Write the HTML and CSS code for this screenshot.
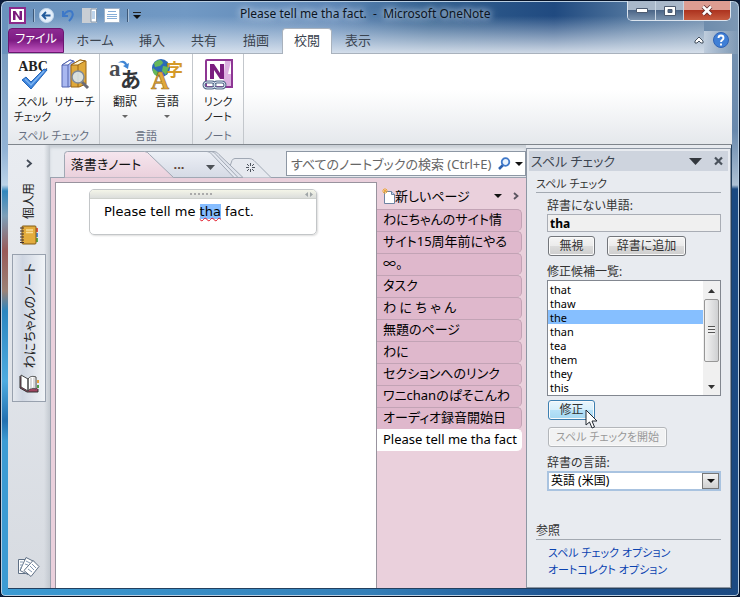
FILE: index.html
```
<!DOCTYPE html>
<html lang="ja">
<head>
  <meta charset="UTF-8">
  <meta name="viewport" content="width=device-width, initial-scale=1.0">
  <title>Please tell me tha fact. - Microsoft OneNote</title>
  <link rel="stylesheet" href="styles.css">
</head>
<body>
<div class="window">
  <header class="titlebar">
    <div class="quick">
      <svg width="17" height="17" viewBox="0 0 17 17"><rect x="1" y="1" width="15" height="15" fill="#fff" stroke="#8a2a8a" stroke-width="2"/><path d="M4 13V4h2.500l4 6V4H13v9h-2.500l-4-6v6z" fill="#7a1a7c"/></svg>
      <span class="sep"></span>
      <button aria-label="戻る"><svg width="15" height="15" viewBox="0 0 15 15"><circle cx="7.500" cy="7.500" r="7" fill="#e4effb" stroke="#c9dcef"/><path d="M11.500 7.500H4M7 4L3.500 7.500 7 11" fill="none" stroke="#205a9c" stroke-width="1.800"/></svg></button>
      <button aria-label="元に戻す"><svg width="14" height="15" viewBox="0 0 14 15"><path d="M2 3v5h5M2.500 7.500C5 3 9 2 11 4c2 3 0 6-3 9" fill="none" stroke="#3d78c8" stroke-width="2"/></svg></button>
      <button aria-label="ドッキング"><svg width="15" height="15" viewBox="0 0 15 15"><path d="M0 0h15v15H0z" fill="#c9ced4"/><path d="M9 1h5.500v13H9z" fill="#fff" stroke="#8396ac"/><path d="M10 4h3M10 6h3M10 8h3M10 10h3" stroke="#7da7d6"/></svg></button>
      <button aria-label="全ページ表示"><svg width="16" height="15" viewBox="0 0 16 15"><path d="M.5.5h15v14H.5z" fill="#fff" stroke="#9eb2c9"/><path d="M4 3.500h8M3 6.500h10M3 8.500h10M3 10.500h10" stroke="#86add8"/></svg></button>
      <span class="sep"></span>
      <button aria-label="カスタマイズ"><svg width="8" height="7" viewBox="0 0 8 7"><path d="M0 .5h8" stroke="#222"/><path d="M0 3h8L4 7z" fill="#111"/></svg></button>
    </div>
    <h1>Please tell me tha fact.&nbsp; - &nbsp;Microsoft OneNote</h1>
    <div class="caption">
      <button aria-label="最小化"><svg width="12" height="6" viewBox="0 0 12 6"><path d="M.5.5h11v4H.5z" fill="#fff" stroke="#4d5b70"/></svg></button>
      <button aria-label="最大化"><svg width="12" height="10" viewBox="0 0 12 10"><path fill-rule="evenodd" d="M.5.500h11v9H.5zM4 3.500h4v3H4z" fill="#fff" stroke="#4d5b70"/></svg></button>
      <button class="close" aria-label="閉じる"><svg width="12" height="11" viewBox="0 0 12 11"><path d="M2 1.500l8 8M10 1.500l-8 8" stroke="#5c2a2a" stroke-width="4"/><path d="M2 1.500l8 8M10 1.500l-8 8" stroke="#fff" stroke-width="2.500"/></svg></button>
    </div>
  </header>

  <nav class="tabs">
    <button class="file">ファイル</button>
    <button class="wide">ホーム</button>
    <button>挿入</button>
    <button>共有</button>
    <button>描画</button>
    <button class="active">校閲</button>
    <button>表示</button>
    <div class="tools">
      <button aria-label="リボンの最小化"><svg width="10" height="8" viewBox="0 0 10 8"><path d="M1 5l4-4 4 4v2H7L5 5 3 7H1z" fill="#fff" stroke="#45505e"/></svg></button>
      <button aria-label="ヘルプ"><svg width="16" height="16" viewBox="0 0 16 16"><circle cx="8" cy="8" r="7.500" fill="#3f7fd6" stroke="#2f62b4"/><path d="M5.500 6c0-3.300 5-3.300 5 0 0 2-2.500 2-2.500 4M8 11.500v2" fill="none" stroke="#fff" stroke-width="1.900"/></svg></button>
    </div>
  </nav>

  <section class="ribbon">
    <div class="group">
      <div class="items">
        <button>
          <svg width="32" height="32" viewBox="0 0 32 32"><text x="16" y="12" text-anchor="middle" class="abc">ABC</text><path d="M5 21l4-3 5 5L27 10l3 1L14 30z" fill="#3f85dc" stroke="#2565b8"/><path d="M8 20l6 6L27 12" fill="none" stroke="#7fb6f2" stroke-width="1.500"/></svg>
          <span>スペル</span><span>チェック</span>
        </button>
        <button>
          <svg width="32" height="32" viewBox="0 0 32 32"><path d="M3 6l8-5 4 1v23l-5 3H3z" fill="#a9b8f0" stroke="#5364b0"/><path d="M3 6h6l5-4-3-1zM9 6v22" fill="#fff" stroke="#5364b0"/><path d="M12 6l9-5 6 1v23l-7 3h-8z" fill="#e0a93a" stroke="#986415"/><path d="M12 6h7l7-4-5-1z" fill="#fff7d8" stroke="#986415"/><path d="M19 6v22" stroke="#986415"/><path d="M23 23l6 6" stroke="#6b6b76" stroke-width="3"/><circle cx="19" cy="18" r="6" fill="#d8eafa" fill-opacity=".85" stroke="#808a98" stroke-width="1.500"/></svg>
          <span>リサーチ</span>
        </button>
      </div>
      <p>スペル チェック</p>
    </div>
    <div class="group lang">
      <div class="items">
        <button>
          <svg width="32" height="32" viewBox="0 0 32 32"><text x="0" y="17" class="latin">a</text><text x="11" y="28" class="kana">あ</text><path d="M9 4c4-4 8-2 9 1l2-1-1 6-5-3 2-1c-1-2-3-3-7-2z" fill="#3f85d4"/></svg>
          <span>翻訳</span><i class="drop"></i>
        </button>
        <button>
          <svg width="32" height="32" viewBox="0 0 32 32"><circle cx="10" cy="9" r="9" fill="#2c69b8"/><path d="M3 4c4-4 8-4 9 0l-3 3-5 1zM12 7l6 1-3 8-4-4zM2 9l5 4-1 4c-3-1-5-4-4-8z" fill="#66b85a"/><text x="15" y="17" class="ji">字</text><text x="0" y="30" class="big-a">A</text></svg>
          <span>言語</span><i class="drop"></i>
        </button>
      </div>
      <p>言語</p>
    </div>
    <div class="group link">
      <div class="items">
        <button>
          <svg width="32" height="32" viewBox="0 0 32 32"><path d="M4 2q0-1 1-1h25v27H4z" fill="#fff" stroke="#8e3694" stroke-width="2"/><path d="M23 2h6l-3 13h3v12h-8z" fill="#dcb0e0"/><path d="M8 20V5h4l6 9V5h4v15h-4l-6-9v9z" fill="#7b1d80"/><g fill="none" stroke="#576c8c" stroke-width="3"><rect x="2" y="23" width="11" height="6" rx="3"/><rect x="12" y="23" width="11" height="6" rx="3"/></g><g fill="none" stroke="#d8e2ef"><rect x="2" y="23" width="11" height="6" rx="3"/><rect x="12" y="23" width="11" height="6" rx="3"/></g></svg>
          <span>リンク</span><span>ノート</span>
        </button>
      </div>
      <p>ノート</p>
    </div>
  </section>

  <main class="workspace">
    <aside class="notebooks">
      <button aria-label="展開"><svg width="6" height="9" viewBox="0 0 6 9"><path d="M1 1l4 3.500L1 8" fill="none" stroke="#444c58" stroke-width="1.800"/></svg></button>
      <button class="book">
        <span>個人用</span>
        <svg width="20" height="20" viewBox="0 0 20 20"><path d="M16 3h3v4h-3z" fill="#e05a4a"/><path d="M16 8h3v4h-3z" fill="#4d8cd8"/><path d="M16 13h3v4h-3z" fill="#5bb04a"/><rect x="3" y="1" width="14" height="18" rx="1" fill="#e3ac3d" stroke="#825a15"/><path d="M1 3h4M1 6h4M1 9h4M1 12h4M1 15h4M1 17.500h4" stroke="#433"/><path d="M7 5h7M7 7.500h7" stroke="#fae09a" stroke-width="1.500"/></svg>
      </button>
      <button class="book current">
        <span>わにちゃんのノート</span>
        <svg width="21" height="20" viewBox="0 0 21 20"><path d="M1 2v12l7 4h11v-3" fill="#a04560" stroke="#333"/><path d="M2 1l7 4v12l-7-4zM9 5c2-3 5-3 8-2v12c-3-1-6-1-8 2z" fill="#fff" stroke="#444"/><path d="M12 4v11M15 3.500V14" stroke="#b5b5b5"/><path d="M18 6h2v3h-2z" fill="#e8a23a"/><path d="M18 11h2v3h-2z" fill="#4f9e48"/></svg>
      </button>
      <button class="unfiled" aria-label="未整理ノート"><svg width="24" height="22" viewBox="0 0 24 22"><path d="M1.500 3.500h9v14h-9z" fill="#fff" stroke="#5f7085"/><path d="M9 1.500l8 4-6 13-8-4z" fill="#fff" stroke="#5f7085"/><path d="M16 4.500l6 6-8 10-7-6z" fill="#fff" stroke="#5f7085"/><path d="M3 6h3M3 9h3M3 12h2M9 5l4 2M8 8l3 1M15 8l4 4M13 10l4 4M11 13l4 3" stroke="#8499b2"/></svg></button>
    </aside>

    <section class="notebook">
      <div class="topline">
        <div class="sections">
          <svg class="shape" width="236" height="27" viewBox="0 0 236 27">
            <defs><linearGradient id="pink" x2="0" y2="1"><stop offset="0" stop-color="#f6e6ee"/><stop offset="1" stop-color="#ead0dc"/></linearGradient><linearGradient id="gray" x2="0" y2="1"><stop offset="0" stop-color="#edf0f6"/><stop offset="1" stop-color="#d5dae5"/></linearGradient></defs>
            <g stroke="#a0a8b4"><path d="M176 26.500l6-17q1-2 3-2h14q3 0 5 2l17 17" fill="#e6e9ef"/><path d="M90 .5h74q3 0 5 3l24 23H90" fill="#dfe3ec"/><path d="M90 .5h71q3 0 5 3l22 23H90" fill="#e4e8f0"/><path d="M90 .5h67q3 0 5 3l22 23H90z" fill="url(#gray)"/><path d="M14.500 26.500v-23q0-3 3-3h77q3 0 5 3l24 23" fill="url(#pink)"/></g>
          </svg>
          <button class="section-tab">落書きノート</button>
          <button class="more">...</button>
          <button class="list" aria-label="セクション一覧"><svg width="9" height="5" viewBox="0 0 9 5"><path d="M0 0h9L4.500 5z" fill="#4c5156"/></svg></button>
          <button class="add" aria-label="新しいセクション"><svg width="9" height="9" viewBox="0 0 9 9"><path d="M4.500 0v3M4.500 6v3M0 4.500h3M6 4.500h3M1 1l2 2M6 6l2 2M8 1L6 3M3 6L1 8" stroke="#4e555e"/></svg></button>
        </div>
        <label class="search">
          <input type="text" placeholder="すべてのノートブックの検索 (Ctrl+E)">
          <svg width="13" height="13" viewBox="0 0 13 13"><path d="M5 8l-4 4" stroke="#2b5fae" stroke-width="2.500"/><circle cx="7.500" cy="5" r="3.800" fill="#e8f2fd" stroke="#3f78c9" stroke-width="1.800"/></svg>
          <i class="drop"></i>
        </label>
      </div>
      <div class="canvas">
        <article class="page">
          <div class="note">
            <div class="handle"><span class="dots"></span><svg width="8" height="5" viewBox="0 0 8 5"><path d="M3 0v5L0 2.500zM5 0v5l3-2.500z" fill="#a0a6a8"/></svg></div>
            <p>Please tell me <mark>tha</mark> fact.</p>
          </div>
        </article>
        <div class="pages">
          <div class="new">
            <svg width="13" height="16" viewBox="0 0 13 16"><path d="M2.500 3.500h7l3 3v9h-10z" fill="#fff" stroke="#6d83a2"/><path d="M9.500 3.500v3h3" fill="#bcd4ee" stroke="#6d83a2"/><path d="M3 0v6M0 3h6M1 1l4 4M5 1L1 5" stroke="#eda93e"/></svg>
            <button>新しいページ</button>
            <i class="drop"></i>
            <svg width="6" height="8" viewBox="0 0 6 8"><path d="M1 1l3.500 3L1 7" fill="none" stroke="#5b5560" stroke-width="1.800"/></svg>
          </div>
          <ul>
            <li><a href="#">わにちゃんのサイト情</a></li>
            <li><a href="#">サイト15周年前にやる</a></li>
            <li><a href="#">∞。</a></li>
            <li><a href="#">タスク</a></li>
            <li><a href="#">わ に ち ゃ ん</a></li>
            <li><a href="#">無題のページ</a></li>
            <li><a href="#">わに</a></li>
            <li><a href="#">セクションへのリンク</a></li>
            <li><a href="#">ワニchanのぱそこんわ</a></li>
            <li><a href="#">オーディオ録音開始日</a></li>
            <li class="current"><a href="#">Please tell me tha fact</a></li>
          </ul>
        </div>
      </div>
    </section>

    <aside class="pane">
      <header>
        <h2>スペル チェック</h2>
        <button aria-label="メニュー"><svg width="13" height="7" viewBox="0 0 13 7"><path d="M0 0h13L6.500 7z" fill="#33383e"/></svg></button>
        <button aria-label="閉じる"><svg width="9" height="8" viewBox="0 0 9 8"><path d="M1 .5l7 7M8 .5l-7 7" stroke="#4a525c" stroke-width="2.200"/></svg></button>
      </header>
      <form class="body">
        <h3>スペル チェック</h3>
        <div class="fields">
          <label for="word">辞書にない単語:</label>
          <input id="word" type="text" value="tha" readonly>
          <div class="row">
            <button type="button" class="btn">無視</button>
            <button type="button" class="btn mid">辞書に追加</button>
          </div>
          <label for="words">修正候補一覧:</label>
          <div class="listbox">
            <select id="words" size="8">
              <option>that</option>
              <option>thaw</option>
              <option selected>the</option>
              <option>than</option>
              <option>tea</option>
              <option>them</option>
              <option>they</option>
              <option>this</option>
            </select>
            <div class="scroll">
              <svg width="7" height="4" viewBox="0 0 7 4"><path d="M0 4h7L3.500 0z" fill="#333"/></svg>
              <div class="thumb"></div>
              <svg width="7" height="4" viewBox="0 0 7 4"><path d="M0 0h7L3.500 4z" fill="#333"/></svg>
            </div>
          </div>
          <div class="fix">
            <button type="button" class="btn hot">修正</button>
            <svg class="cursor" width="13" height="20" viewBox="0 0 13 20"><path d="M1 1v15l3.500-3 2.500 6 2.500-1-2.500-6h5z" fill="#fff" stroke="#222831"/></svg>
          </div>
          <button type="button" class="btn long" disabled>スペル チェックを開始</button>
          <label for="dict">辞書の言語:</label>
          <div class="combo">
            <select id="dict"><option>英語 (米国)</option></select>
            <span><i class="drop"></i></span>
          </div>
        </div>
        <h3 class="see">参照</h3>
        <div class="links">
          <a href="#">スペル チェック オプション</a>
          <a href="#">オートコレクト オプション</a>
        </div>
      </form>
    </aside>
  </main>
</div>
</body>
</html>
```
FILE: styles.css
```
* { box-sizing: border-box; }
body {
  margin: 0;
  background: #0b1c3a;
  color: #222;
  font: 13px/16px "Noto Sans", "Noto Sans CJK JP", sans-serif;
  font-feature-settings: "palt";
}
h1, h2, h3, p, ul { margin: 0; padding: 0; font-weight: normal; }
button { margin: 0; padding: 0; border: 0; background: none; color: inherit; font: inherit; font-feature-settings: inherit; }
input, select { font: inherit; font-feature-settings: inherit; color: inherit; border-radius: 0; }
a { text-decoration: none; color: inherit; }
svg { display: block; flex: none; overflow: visible; }
.drop { width: 0; height: 0; border: 4px solid transparent; border-top-color: #111; border-bottom: 0; }

/* window frame */
.window {
  min-height: 100vh;
  display: flex;
  flex-direction: column;
  padding: 0 7px 7px;
  border: 1px solid #061226;
  border-radius: 7px 7px 5px 5px;
  box-shadow: inset 0 0 0 1px #b9cee2;
  background:
    linear-gradient(rgba(225,232,241,0) 15px, rgba(225,232,241,.9) 52px) 7px 0 / calc(100% - 42px) 53px no-repeat,
    linear-gradient(90deg, rgba(225,232,241,.7), rgba(225,232,241,0)) 100% 30px / 35px 23px no-repeat,
    linear-gradient(90deg, #6a92bd 0, #7199c4 25%, #5d86b5 45%, #33608f 58%, #204a80 75%, #4e739c 85%, #7d98b4) 0 0 / 100% 53px no-repeat,
    linear-gradient(90deg, #3c9bd3 0, #347fb8 50%, #1f5592 75%, #1c4a82) 0 100% / 100% 8px no-repeat,
    linear-gradient(#6d90b5 0, #93b4d6 150px, #bcd3e8 184px, #3287bd 190px, #7d9fb8 215px, #9a5a58 250px, #9b8277 290px, #2c86c0 310px, #4eabe0 380px, #2370b0 420px, #3c9bd3 440px) 0 0 / 8px 100% no-repeat,
    linear-gradient(#7d98b4 0, #6888ac 130px, #aec1d5 184px, #1b4a82 188px, #1c4a82);
}

.titlebar { display: flex; height: 27px; }
.quick { width: 232px; display: flex; align-items: center; gap: 7px; padding: 2px 0 0 1px; }
.quick .sep { width: 1px; height: 13px; background: #3d5878; box-shadow: 1px 0 #a9c1da; }
.quick .sep + button { margin-left: -2px; }
.titlebar h1 {
  flex: 1;
  color: #0c1522;
  font-size: 12px;
  line-height: 26px;
  white-space: nowrap;
  text-shadow: 0 0 6px #dde8f5, 0 0 10px #c5d5e8;
}
.caption { display: flex; height: 20px; margin-right: 1px; border: 1px solid #dbe4ee; border-top: 0; border-radius: 0 0 5px 5px; overflow: hidden; }
.caption button {
  width: 28px;
  display: flex;
  align-items: center;
  justify-content: center;
  border-right: 1px solid #c9d5e3;
  background: linear-gradient(#a9b8ca 0 45%, #4c6688 50%, #7b93ae);
}
.caption .close { width: 46px; border: 0; background: linear-gradient(#dd9d92 0 45%, #ad3420 50%, #c75b3f); }

/* ribbon tabs */
.tabs { display: flex; height: 26px; border-bottom: 1px solid #a9b2bd; }
.tabs > button { width: 52px; height: 26px; padding-bottom: 3px; color: #3b4450; }
.tabs > .wide { width: 62px; }
.tabs > .file {
  width: 56px;
  height: 25px;
  border: 1px solid #6b1670;
  border-radius: 4px 4px 0 0;
  background: linear-gradient(#8c2b91, #7d1b83 50%, #c256c0);
  color: #fff;
  font-size: 12px;
}
.tabs > .active { width: 50px; border: 1px solid #a9b2bd; border-bottom: 0; border-radius: 4px 4px 0 0; background: #fff; }
.tools { display: flex; align-items: center; gap: 9px; margin: 0 3px 2px auto; }

.ribbon {
  display: flex;
  height: 91px;
  border-bottom: 1px solid #7f858c;
  background: linear-gradient(#fff 40%, #e5e8ec);
}
.group { width: 92px; display: flex; flex-direction: column; border-right: 1px solid #c3c7cc; }
.group.lang { width: 93px; }
.group.link { width: 51px; }
.items { flex: 1; display: flex; justify-content: center; padding-top: 5px; }
.items button { width: 42px; display: flex; flex-direction: column; align-items: center; font-size: 11px; line-height: 15px; white-space: nowrap; }
.items svg { margin-bottom: 3px; }
.lang .items button, .lang p { font-size: 12px; }
.items .drop { border-width: 3px; border-bottom: 0; border-top-color: #666; margin-top: 6px; }
.group p { color: #666e80; font-size: 11px; line-height: 17px; text-align: center; }
.abc { font: bold 14px "Liberation Serif", serif; fill: #222; }
.latin { font: bold 23px "Liberation Serif", serif; fill: #4a4d52; }
.kana { font: bold 21px "Noto Sans CJK JP", sans-serif; fill: #33363b; }
.ji { font: bold 17px "Noto Sans CJK JP", sans-serif; fill: #d59a28; }
.big-a { font: bold 25px "Liberation Serif", serif; fill: #e0a83a; stroke: #9a6a18; stroke-width: .6px; }

.workspace { flex: 1; display: flex; background: #e7eaef; border: solid #23405f; border-width: 0 1px 1px 0; }

/* notebook bar */
.notebooks {
  width: 42px;
  display: flex;
  flex-direction: column;
  align-items: center;
  padding: 14px 0 10px;
  background: linear-gradient(90deg, transparent 36px, #c3c9d0), linear-gradient(#e9ecf1, #d7dbe1);
}
.book { display: flex; flex-direction: column; align-items: center; gap: 6px; width: 34px; margin-top: 15px; }
.book span { writing-mode: vertical-rl; text-orientation: sideways; transform: rotate(180deg); font-size: 12px; white-space: nowrap; }
.book.current {
  margin-top: 9px;
  padding: 8px 0 7px;
  border: 1px solid #98a1ae;
  background: linear-gradient(90deg, #e4e8ee, #cfd6e2 30%, #f1f4f7);
}
.book.current span { font-size: 13px; }
.unfiled { margin-top: auto; }

.notebook { flex: 1; min-width: 0; display: flex; flex-direction: column; }
.topline { display: flex; height: 32px; padding-top: 6px; box-shadow: inset 0 3px 3px #c9cfd6; }
.sections { position: relative; width: 236px; display: flex; align-items: center; }
.shape { position: absolute; left: 0; top: 0; }
.sections button { position: relative; }
.section-tab { width: 112px; color: #111; }
.more { width: 34px; font-weight: bold; color: #5d4435; line-height: 12px; }
.list { width: 32px; padding: 6px 0 0 10px; }
.add { padding: 6px 0 0 18px; }
.search { flex: 1; height: 25px; min-width: 0; display: flex; align-items: center; gap: 4px; padding: 0 2px 0 4px; border: 1px solid #8d97a4; background: #fff; }
.search input { flex: 1; min-width: 0; padding: 0; border: 0; outline: 0; font-size: 13px; }
.search input::placeholder { color: #666; opacity: 1; }

.canvas { flex: 1; display: flex; padding: 4px 0 0 4px; border: solid #9aa2af; border-width: 1px 0 0 1px; background: #ead0dc; }
.page { flex: 1; min-width: 0; padding: 6px 59px 0 33px; border: 1px solid #98939e; border-bottom: 0; background: #fff; }
.note { height: 46px; border: 1px solid #c3c6c8; border-radius: 5px; box-shadow: 1px 1px 2px #ddd; overflow: hidden; }
.handle { height: 9px; display: flex; align-items: center; justify-content: flex-end; padding-right: 3px; border-bottom: 1px solid #ced1cc; background: linear-gradient(#f4f5e8, #dcdedc); }
.dots { width: 23px; height: 2px; margin-right: 92px; background: repeating-linear-gradient(90deg, #aaa 0 2px, transparent 2px 4px); }
.note p { padding: 4px 14px; color: #000; font: 13px/18px "DejaVu Sans", sans-serif; white-space: nowrap; }
.note mark { background: #86bdff; color: inherit; text-decoration: underline wavy #e01020 1px; text-decoration-skip-ink: none; }

.pages { width: 149px; color: #000; }
.new { height: 27px; display: flex; align-items: center; padding: 0 7px 0 5px; }
.new button { flex: 1; text-align: left; }
.new svg:last-child { margin-left: 11px; }
.pages ul { list-style: none; margin-right: 4px; }
.pages li { height: 22px; padding-left: 6px; border: 1px solid #c2a3b5; border-width: 1px 1px 0 0; border-radius: 0 5px 5px 0; background: #dfb8cc; line-height: 19px; white-space: nowrap; }
.pages .current { border-color: #fff; background: #fff; }

/* task pane */
.pane { width: 205px; margin-top: 3px; border: 1px solid #8d96a3; background: #e8ebf0; color: #333; font-size: 12px; }
.pane header { display: flex; align-items: center; gap: 12px; height: 20px; margin: 2px; padding: 0 5px 0 2px; background: #ced4de; }
.pane h2 { flex: 1; font-size: 13px; color: #3c4450; }
.body { padding: 3px 9px 0; }
.pane h3 { font-size: 11px; border-bottom: 1px solid #a3a9b1; }
.pane .see { margin-top: 32px; font-size: 12px; }
.fields { display: flex; flex-direction: column; padding-left: 11px; }
.fields label { margin-top: 4px; line-height: 17px; }
.fields input { width: 100%; height: 18px; padding: 0 2px; border: 1px solid #a9adb5; background: #f0f0f0; color: #000; font-weight: bold; }
.row { display: flex; gap: 12px; padding: 4px 0 3px 1px; }
.btn { height: 20px; min-width: 47px; border: 1px solid #73767b; border-radius: 3px; background: linear-gradient(#f5f5f5, #ebebeb 50%, #dcdcdc 50%, #cecece); box-shadow: inset 0 0 0 1px #fafafa; line-height: 16px; }
.btn.mid { width: 79px; }
.btn.hot { border-color: #3c7fb1; background: linear-gradient(#eaf6fd, #d6effc 50%, #b8e2f8 50%, #a5d8f2); }
.btn.long { width: 119px; margin: 7px 0 3px 1px; font-size: 11px; }
.btn:disabled { border-color: #b3b6ba; background: #f1f2f3; color: #999; }
.listbox { display: flex; height: 116px; border: 1px solid #828790; background: #fff; }
.listbox select { flex: 1; min-width: 0; height: 114px; padding: 1px 0; border: 0; outline: 0; background: #fff; color: #000; overflow: hidden; }
.listbox option { min-height: 14px; height: 14px; padding: 0 2px; font-size: 11px; line-height: 14px; }
.listbox option:checked { background: linear-gradient(#86bfff, #86bfff); color: #000; }
.scroll { width: 17px; display: flex; flex-direction: column; align-items: center; padding: 8px 0 6px; background: #f0f0f0; }
.thumb { width: 15px; height: 63px; margin: 6px 0 auto; border: 1px solid #979797; border-radius: 2px; background: repeating-linear-gradient(#555 0 1px, #eee 1px 3px) center / 7px 9px no-repeat, linear-gradient(90deg, #f3f3f3, #cfd0d2); }
.fix { position: relative; padding: 4px 0 0 1px; }
.cursor { position: absolute; left: 38px; top: 13px; }
.combo { position: relative; height: 20px; }
.combo select { width: 100%; height: 20px; padding: 0 2px; appearance: none; border: 2px solid #a9c3e0; outline: 0; background: #fff; color: #000; }
.combo span { position: absolute; right: 2px; top: 2px; width: 17px; height: 16px; display: flex; align-items: center; justify-content: center; border: 1px solid #777; background: linear-gradient(#f3f3f3, #d0d0d0); pointer-events: none; }
.links { display: flex; flex-direction: column; padding: 4px 0 0 12px; color: #0b43b0; font-size: 11px; }
.links a { line-height: 17px; }
```
